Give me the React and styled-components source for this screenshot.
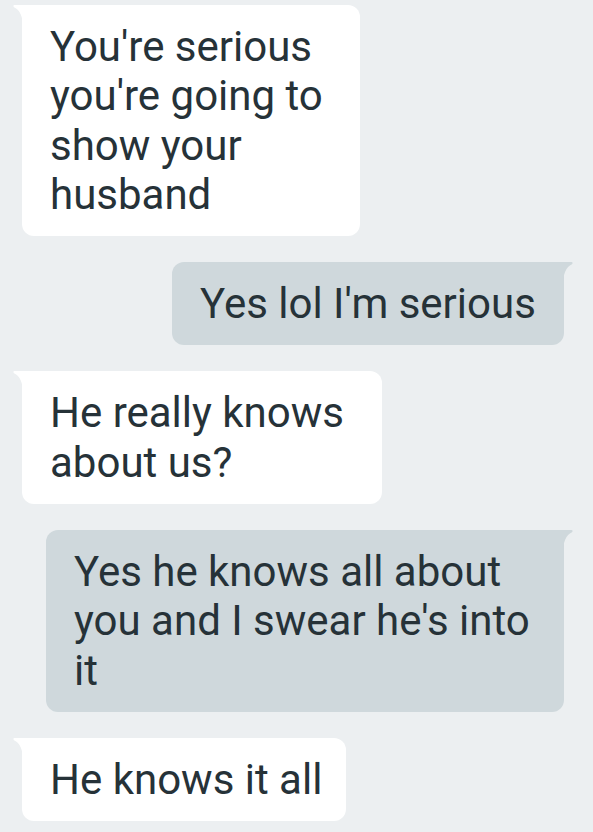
import React from "react";
import styled, { createGlobalStyle } from "styled-components";

const Global = createGlobalStyle`
  html, body { margin: 0; padding: 0; background: #eceff1; }
  body { font-family: Roboto, "Noto Sans", Arial, sans-serif; }
`;

const Thread = styled.div`
  display: flex;
  flex-direction: column;
  gap: 26px;
  padding: 5px 29px 20px 22px;
  width: 593px;
  box-sizing: border-box;
`;

const Row = styled.div`
  display: flex;
  justify-content: ${(p) => (p.$out ? "flex-end" : "flex-start")};
`;

const Bubble = styled.div`
  position: relative;
  box-sizing: border-box;
  width: ${(p) => p.$w}px;
  padding: 17px 20px 17px 28px;
  background: ${(p) => (p.$out ? "#cfd8dc" : "#ffffff")};
  color: #263238;
  font-size: 42px;
  line-height: 49.3px;
  letter-spacing: 0;
  border-radius: ${(p) => (p.$out ? "12px 0 12px 12px" : "0 12px 12px 12px")};
`;

const Tail = styled.svg`
  position: absolute;
  top: 0;
  width: 10px;
  height: 22px;
  ${(p) => (p.$out ? "right: -9px; transform: scaleX(-1);" : "left: -9px;")}
`;

const Line = styled.div`
  white-space: nowrap;
`;

function Msg({ out, w, lines }) {
  return (
    <Row $out={out}>
      <Bubble $out={out} $w={w}>
        <Tail $out={out} viewBox="0 0 10 22">
          <path
            d="M1.5 0 H10 V22 C10 12 7 5 1 2.2 C0 1.6 0.3 0 1.5 0 Z"
            fill={out ? "#cfd8dc" : "#ffffff"}
          />
        </Tail>
        {lines.map((l, i) => (
          <Line key={i}>{l}</Line>
        ))}
      </Bubble>
    </Row>
  );
}

export default function App() {
  return (
    <>
      <Global />
      <Thread>
        <Msg w={338} lines={["You're serious", "you're going to", "show your", "husband"]} />
        <Msg out w={392} lines={["Yes lol I'm serious"]} />
        <Msg w={360} lines={["He really knows", "about us?"]} />
        <Msg out w={518} lines={["Yes he knows all about", "you and I swear he's into", "it"]} />
        <Msg w={324} lines={["He knows it all"]} />
      </Thread>
    </>
  );
}
